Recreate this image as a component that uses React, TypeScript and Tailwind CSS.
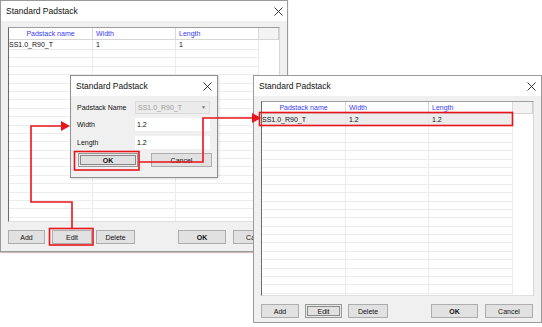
import React from "react";

const XIcon = () => (
  <svg width="9" height="9" viewBox="0 0 9 9" className="shrink-0">
    <path d="M0.5 0.5 L8.5 8.5 M8.5 0.5 L0.5 8.5" stroke="#222" strokeWidth="0.9" />
  </svg>
);

type Btn = { label: string; w: number; ml: number; bold?: boolean; focus?: boolean };

const Button = ({ b }: { b: Btn }) => (
  <div
    style={{ width: b.w, marginLeft: b.ml }}
    className={
      "h-[14px] shrink-0 flex items-center justify-center bg-[#e1e1e1] border text-[7px] leading-none text-[#111] " +
      (b.focus
        ? "border-[#9a9a9a] shadow-[inset_0_0_0_1px_#e8e8e8,inset_0_0_0_2px_#8a8a8a]"
        : "border-[#adadad]") +
      (b.bold ? " font-bold" : "")
    }
  >
    {b.label}
  </div>
);

const TitleBar = ({ title, pr }: { title: string; pr: string }) => (
  <div className={"h-[20px] shrink-0 bg-white flex items-center justify-between pl-[5px] " + pr}>
    <span className="text-[8.5px] leading-none text-[#111]">{title}</span>
    <XIcon />
  </div>
);

const Grid = ({
  width,
  height,
  cols,
  first,
  firstH,
  selected,
}: {
  width: number;
  height: number;
  cols: number[];
  first: string[];
  firstH: number;
  selected?: boolean;
}) => {
  const filler = Array.from({ length: 24 });
  return (
    <div
      style={{ width, height }}
      className="shrink-0 bg-white border-l border-l-[#6b6b6b] border-t border-t-[#9d9d9d] border-r border-r-[#d6d6d6] border-b border-b-[#e0e0e0] overflow-hidden flex flex-col"
    >
      <div className="h-[12px] shrink-0 flex border-b border-[#d5d5d5]">
        {["Padstack name", "Width", "Length"].map((h, i) => (
          <div
            key={h}
            style={{ width: cols[i] }}
            className={
              "shrink-0 h-full border-r border-[#d9d9d9] flex items-center text-[7px] leading-none text-[#3a3af2] " +
              (i === 0 ? "justify-center" : "pl-[3px]")
            }
          >
            {h}
          </div>
        ))}
        <div className="flex-1 h-full bg-[#f3f3f3] border-r border-[#d0d0d0]" />
      </div>
      <div className="flex">
        {first.map((t, i) => (
          <div
            key={i}
            style={{ width: cols[i], height: firstH }}
            className={
              "shrink-0 border-r border-b border-[#e8e8e8] flex items-center text-[7px] leading-none text-[#111] " +
              (selected ? "bg-[#ececec]" : "") +
              (i > 0 ? " pl-[3px]" : "")
            }
          >
            {t}
          </div>
        ))}
      </div>
      {filler.map((_, r) => (
        <div key={r} className="flex shrink-0">
          {cols.map((w, i) => (
            <div key={i} style={{ width: w }} className="h-[8.4px] shrink-0 border-r border-b border-[#ececec]" />
          ))}
        </div>
      ))}
    </div>
  );
};

export default function App() {
  const leftBtns: Btn[] = [
    { label: "Add", w: 37, ml: 0 },
    { label: "Edit", w: 40, ml: 7 },
    { label: "Delete", w: 39, ml: 4 },
    { label: "OK", w: 48, ml: 43, bold: true },
    { label: "Cancel", w: 48, ml: 7 },
  ];
  const rightBtns: Btn[] = [
    { label: "Add", w: 38, ml: 0 },
    { label: "Edit", w: 37, ml: 6, focus: true },
    { label: "Delete", w: 40, ml: 6 },
    { label: "OK", w: 47, ml: 43, bold: true },
    { label: "Cancel", w: 48, ml: 7 },
  ];

  return (
    <div className="relative w-[542px] h-[327px] bg-white overflow-hidden font-['Liberation_Sans',Arial,sans-serif]">
      {/* Left window */}
      <div className="absolute left-0 top-0 w-[288px] h-[252px] border border-[#9a9a9a] bg-[#f0f0f0] flex flex-col shadow-[0_1px_1px_rgba(120,60,60,0.35)]">
        <TitleBar title="Standard Padstack" pr="pr-[4px]" />
        <div className="flex flex-col pl-[7px] pt-[6px]">
          <Grid width={272} height={195} cols={[84, 83, 83]} first={["SS1.0_R90_T", "1", "1"]} firstH={10} />
          <div className="flex mt-[8px]">
            {leftBtns.map((b) => (
              <Button key={b.label} b={b} />
            ))}
          </div>
        </div>
      </div>

      {/* Right window */}
      <div className="absolute left-[253px] top-[75px] w-[289px] h-[248px] border border-[#9a9a9a] bg-[#f0f0f0] flex flex-col">
        <TitleBar title="Standard Padstack" pr="pr-[5px]" />
        <div className="flex flex-col pl-[7px] pt-[5px]">
          <Grid
            width={273}
            height={195}
            cols={[84, 83, 84]}
            first={["SS1.0_R90_T", "1.2", "1.2"]}
            firstH={12}
            selected
          />
          <div className="flex mt-[8px]">
            {rightBtns.map((b) => (
              <Button key={b.label} b={b} />
            ))}
          </div>
        </div>
      </div>

      {/* Middle dialog */}
      <div className="absolute left-[70px] top-[75px] w-[148px] h-[103px] border border-[#8f8f8f] bg-[#f0f0f0] flex flex-col shadow-[1px_1px_2px_rgba(0,0,0,0.15)]">
        <TitleBar title="Standard Padstack" pr="pr-[5px]" />
        <div className="flex flex-col pl-[6px] pr-[6px] pt-[5px]">
          <div className="flex items-center h-[13px]">
            <span className="w-[58px] shrink-0 text-[7px] leading-none text-[#111]">Padstack Name</span>
            <div className="w-[75px] h-full bg-[#ebebeb] border border-[#dcdcdc] flex items-center justify-between pl-[2px] pr-[3px]">
              <span className="text-[7px] leading-none text-[#9c9c9c]">SS1.0_R90_T</span>
              <span className="text-[5px] leading-none text-[#777]">▼</span>
            </div>
          </div>
          <div className="flex items-center h-[13px] mt-[4px]">
            <span className="w-[58px] shrink-0 text-[7px] leading-none text-[#111]">Width</span>
            <div className="w-[75px] h-full bg-white flex items-center pl-[2px] text-[7px] leading-none text-[#111]">1.2</div>
          </div>
          <div className="flex items-center h-[13px] mt-[5px]">
            <span className="w-[58px] shrink-0 text-[7px] leading-none text-[#111]">Length</span>
            <div className="w-[75px] h-full bg-white flex items-center pl-[2px] text-[7px] leading-none text-[#111]">1.2</div>
          </div>
          <div className="flex mt-[4px]">
            <Button b={{ label: "OK", w: 60, ml: 1, bold: true, focus: true }} />
            <Button b={{ label: "Cancel", w: 61, ml: 13 }} />
          </div>
        </div>
      </div>

      {/* Red annotations */}
      <svg className="absolute inset-0 pointer-events-none" width="542" height="327" viewBox="0 0 542 327">
        <g fill="none" stroke="#e8141c" strokeWidth="1.6">
          <rect x="49.5" y="228.5" width="43.5" height="16.5" />
          <rect x="74.5" y="151.5" width="64.5" height="18.5" />
          <rect x="259.5" y="112.5" width="253" height="13" />
          <path d="M72 228 V202 H31 V126 H62" />
          <path d="M139 162 H203 V118 H253" />
        </g>
        <polygon points="61,121 70,126 61,131" fill="#e8141c" />
        <polygon points="252,113 261,118 252,123" fill="#e8141c" />
      </svg>
    </div>
  );
}
